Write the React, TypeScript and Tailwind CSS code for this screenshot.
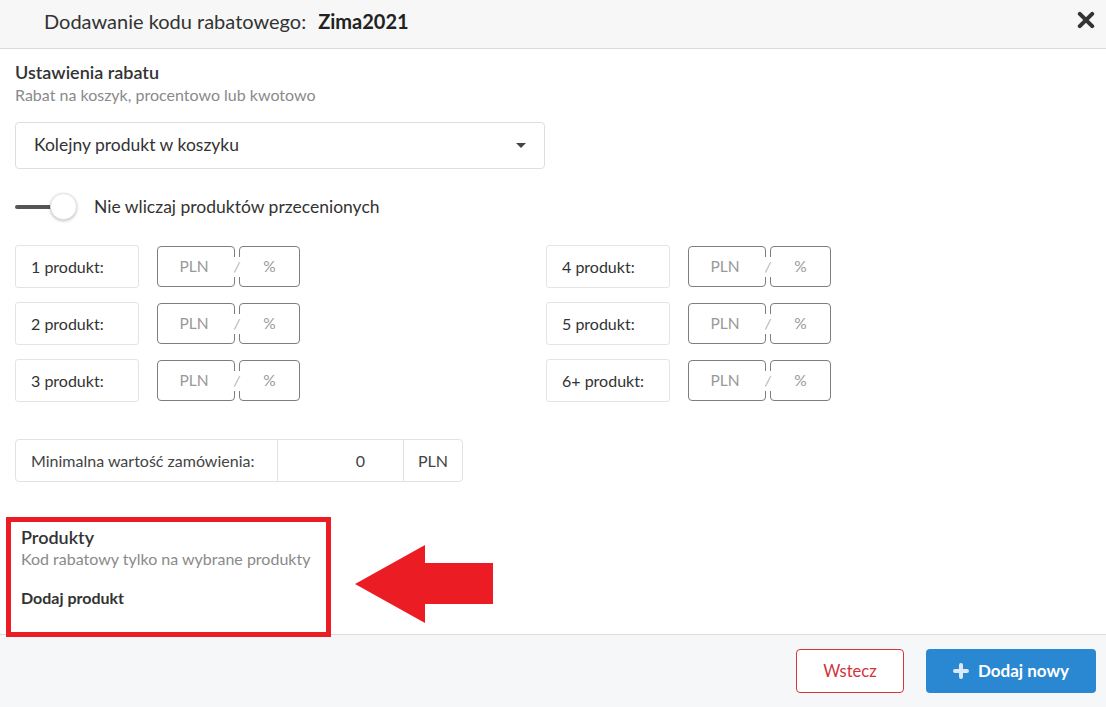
import React from 'react';

const font = "font-['Lato','Noto_Sans',sans-serif]";

function PriceInput() {
  return (
    <div className="relative flex h-[41px] w-[143px]">
      <div className="flex h-full w-[78px] items-center justify-center rounded-[4px] border border-[#7e7e7e] pr-[4px] text-[15.5px] text-[#999]">
        PLN
      </div>
      <div className="ml-[4px] flex h-full w-[61px] items-center justify-center rounded-[4px] border border-[#7e7e7e] text-[15.5px] text-[#999]">
        %
      </div>
      <span className="absolute left-[76px] top-1/2 -translate-y-1/2 bg-white px-[1px] text-[14px] italic leading-[20px] text-[#aaa]">/</span>
    </div>
  );
}

function DiscountRow({ label }: { label: string }) {
  return (
    <div className="flex items-center gap-[18px]">
      <div className="flex h-[43px] w-[124px] items-center rounded-[3px] border border-[#e4e4e4] pl-[15px] text-[16px] text-[#333]">
        {label}
      </div>
      <PriceInput />
    </div>
  );
}

export default function App() {
  const left = ['1 produkt:', '2 produkt:', '3 produkt:'];
  const right = ['4 produkt:', '5 produkt:', '6+ produkt:'];

  return (
    <div className={`${font} flex h-[707px] w-[1106px] flex-col overflow-hidden bg-white text-[#333]`}>
      {/* header */}
      <div className="flex h-[49px] shrink-0 items-center justify-between border-b border-[#dcdcdc] bg-[#f7f7f7] pb-[6px] pl-[44px] pr-[11px]">
        <div className="flex items-baseline text-[20px] leading-[26px]">
          <span className="text-[#333]">Dodawanie kodu rabatowego:</span>
          <span className="ml-[12px] font-bold text-[#222]">Zima2021</span>
        </div>
        <svg width="18" height="18" viewBox="0 0 16 16" className="mb-[2px]">
          <path d="M2.5 2.5 L13.5 13.5 M13.5 2.5 L2.5 13.5" stroke="#333" strokeWidth="3.6" strokeLinecap="round" />
        </svg>
      </div>

      {/* body */}
      <div className="relative flex-1 px-[15px] pt-[12px]">
        <div className="text-[18px] font-semibold leading-[23px] text-[#333]">Ustawienia rabatu</div>
        <div className="text-[16px] leading-[21px] text-[#8a8a8a]">Rabat na koszyk, procentowo lub kwotowo</div>

        <div className="mt-[17px] flex h-[47px] w-[530px] items-center justify-between rounded-[4px] border border-[#dedede] pl-[18px] pr-[18px] text-[17.5px] text-[#333]">
          <span>Kolejny produkt w koszyku</span>
          <svg width="10" height="6" viewBox="0 0 10 6">
            <path d="M0 0 L10 0 L5 5 Z" fill="#444" />
          </svg>
        </div>

        <div className="mt-[24px] flex h-[28px] items-center">
          <div className="relative h-[28px] w-[63px]">
            <div className="absolute left-0 top-[12px] h-[4px] w-[40px] rounded-full bg-[#555]" />
            <div className="absolute left-[35px] top-0 h-[27px] w-[27px] rounded-full border border-[#e2e2e2] bg-white shadow-[0_1px_3px_rgba(0,0,0,0.25)]" />
          </div>
          <span className="ml-[16px] text-[17.5px] text-[#333]">Nie wliczaj produktów przecenionych</span>
        </div>

        <div className="mt-[24px] flex">
          <div className="flex w-[531px] flex-col gap-[14px]">
            {left.map((l) => (
              <DiscountRow key={l} label={l} />
            ))}
          </div>
          <div className="flex flex-col gap-[14px]">
            {right.map((l) => (
              <DiscountRow key={l} label={l} />
            ))}
          </div>
        </div>

        <div className="mt-[37px] flex h-[43px] w-[448px] rounded-[4px] border border-[#e2e2e2] text-[16px]">
          <div className="flex w-[262px] items-center border-r border-[#e2e2e2] pl-[15px] text-[#444]">Minimalna wartość zamówienia:</div>
          <div className="flex w-[126px] items-center justify-end border-r border-[#e2e2e2] pr-[38px] text-[#444]">0</div>
          <div className="flex flex-1 items-center justify-center text-[#444]">PLN</div>
        </div>

        <div className="ml-[6px] mt-[44px]">
          <div className="text-[18px] font-semibold leading-[22px] text-[#333]">Produkty</div>
          <div className="text-[16px] leading-[21px] text-[#8a8a8a]">Kod rabatowy tylko na wybrane produkty</div>
          <div className="mt-[19px] text-[16px] font-bold leading-[20px] text-[#333]">Dodaj produkt</div>
        </div>

        {/* annotation overlay */}
        <div className="absolute left-[6px] top-[468px] h-[120px] w-[325px] border-[5px] border-[#ec1c24]" />
        <svg className="absolute left-[354px] top-[495px]" width="142" height="82" viewBox="0 0 142 82">
          <path d="M1 40 L71 1 L71 19 L139 19 L139 60 L71 60 L71 79 Z" fill="#ec1c24" />
        </svg>
      </div>

      {/* footer */}
      <div className="flex h-[73px] shrink-0 items-center justify-end gap-[22px] border-t border-[#dcdcdc] bg-[#f5f7f9] pr-[10px]">
        <button className="h-[44px] w-[108px] rounded-[4px] border border-[#d8343c] bg-white text-[16.5px] text-[#d3323a]">Wstecz</button>
        <button className="flex h-[44px] w-[170px] items-center justify-center gap-[9px] rounded-[4px] bg-[#2a88d3] text-[17px] font-bold text-white">
          <svg width="16" height="16" viewBox="0 0 16 16">
            <path d="M8 2 V14 M2 8 H14" stroke="#dbe9f6" strokeWidth="4" strokeLinecap="round" />
          </svg>
          Dodaj nowy
        </button>
      </div>
    </div>
  );
}
